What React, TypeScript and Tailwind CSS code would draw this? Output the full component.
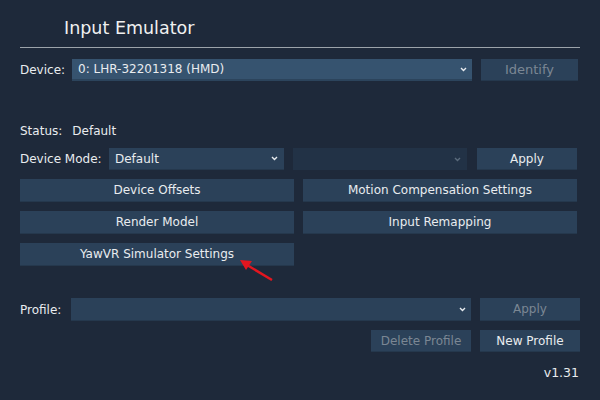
import React from "react";

const font = { fontFamily: '"DejaVu Sans", Tahoma, sans-serif' };

function Chevron({ dim }: { dim?: boolean }) {
  return (
    <svg width="7" height="5" viewBox="0 0 7 5" className="shrink-0">
      <path d="M1 1 L3.5 3.5 L6 1" fill="none" stroke={dim ? "#5b6b7c" : "#e8ecf0"} strokeWidth="1.4" />
    </svg>
  );
}

function Btn({ children, className = "", disabled }: { children: React.ReactNode; className?: string; disabled?: boolean }) {
  return (
    <div
      className={`h-[22px] flex items-center justify-center bg-[#2b4159] border-b border-[#25384d] ${disabled ? "text-[#7b8794]" : "text-[#e9ecef]"} ${className}`}
    >
      {children}
    </div>
  );
}

export default function App() {
  return (
    <div className="w-[600px] h-[400px] bg-[#1e293a] text-[#e9ecef] text-[12px] relative overflow-hidden" style={font}>
      <div className="px-5">
        <div className="pl-[44px] pt-[14px] h-[47px] text-[17.5px] leading-[28px] text-[#f0f0f0]">Input Emulator</div>
        <div className="h-px bg-[#9ca3aa] w-[560px]" />
        <div className="flex items-center mt-[11px] h-[22px]">
          <div className="w-[52px]">Device:</div>
          <div className="w-[400px] h-[22px] bg-[#36536f] border-b-2 border-[#2c445c] flex items-center pl-[6px] pr-[5px] justify-between">
            <span>0: LHR-32201318 (HMD)</span>
            <Chevron />
          </div>
          <Btn disabled className="ml-[9px] w-[97px] text-[13px]">Identify</Btn>
        </div>

        <div className="mt-[44px] h-[12px] flex items-center">
          <span>Status:</span>
          <span className="ml-[10px]">Default</span>
        </div>

        <div className="flex items-center mt-[11px] h-[22px]">
          <div className="w-[89px]">Device Mode:</div>
          <div className="w-[175px] h-[22px] bg-[#2b4159] border-b border-[#25384d] flex items-center pl-[6px] pr-[6px] justify-between">
            <span>Default</span>
            <Chevron />
          </div>
          <div className="ml-[9px] w-[174px] h-[22px] bg-[#223246] flex items-center justify-end pr-[6px]">
            <Chevron dim />
          </div>
          <Btn className="ml-[10px] w-[100px]">Apply</Btn>
        </div>

        <div className="grid grid-cols-[274px_274px] gap-x-[9px] gap-y-[9px] mt-[9px]">
          <Btn className="h-[23px]">Device Offsets</Btn>
          <Btn className="h-[23px]">Motion Compensation Settings</Btn>
          <Btn className="h-[23px]">Render Model</Btn>
          <Btn className="h-[23px]">Input Remapping</Btn>
          <Btn className="h-[23px]">YawVR Simulator Settings</Btn>
        </div>

        <div className="flex items-center mt-[32px] h-[23px]">
          <div className="w-[51px]">Profile:</div>
          <div className="w-[400px] h-[23px] bg-[#2b4159] border-b border-[#25384d] flex items-center justify-end pr-[5px]">
            <Chevron />
          </div>
          <Btn disabled className="ml-[9px] w-[100px] h-[23px]">Apply</Btn>
        </div>

        <div className="flex justify-end mt-[9px] w-[560px] gap-[9px]">
          <Btn disabled className="w-[100px] h-[22px]">Delete Profile</Btn>
          <Btn className="w-[100px] h-[22px]">New Profile</Btn>
        </div>

        <div className="w-[559px] text-right mt-[14px] leading-[14px] text-[12.5px]">v1.31</div>
      </div>

      <svg className="absolute left-0 top-0 pointer-events-none" width="600" height="400">
        <line x1="272" y1="280" x2="247" y2="265" stroke="#e3161f" strokeWidth="2.5" />
        <polygon points="240,260 252,261 246,270" fill="#e3161f" />
      </svg>
    </div>
  );
}
